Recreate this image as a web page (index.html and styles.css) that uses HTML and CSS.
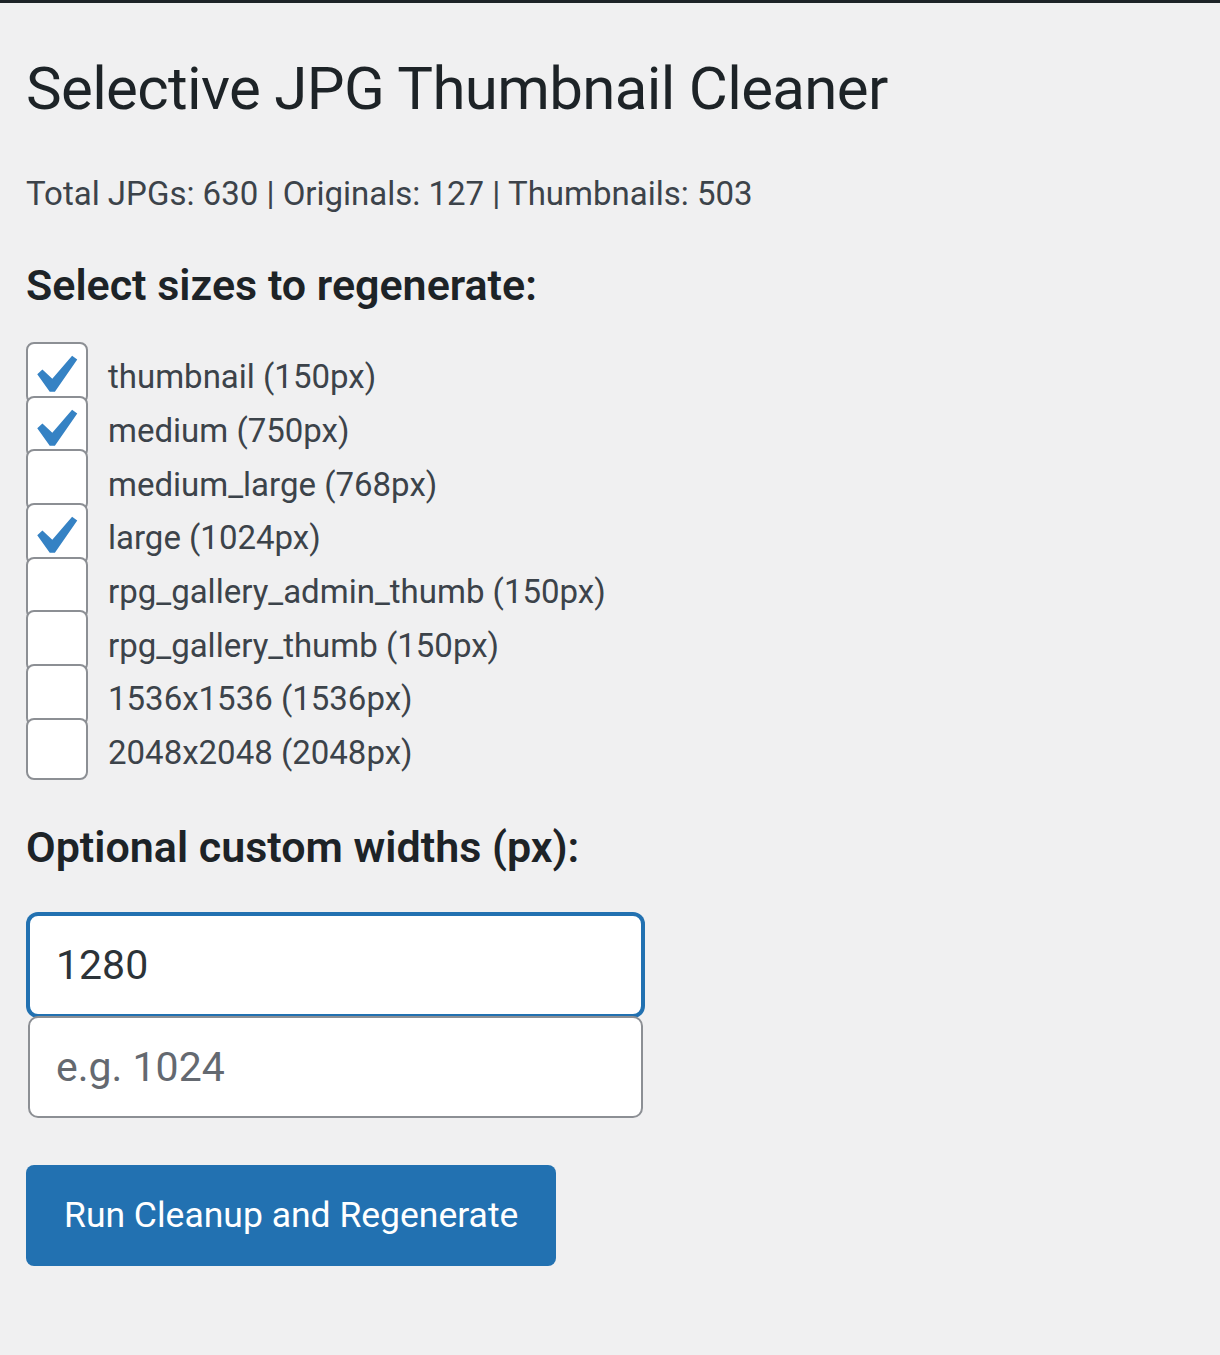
FILE: index.html
```html
<!DOCTYPE html>
<html lang="en">
<head>
  <meta charset="UTF-8">
  <title>Selective JPG Thumbnail Cleaner</title>
  <link rel="stylesheet" href="styles.css">
</head>
<body>

  <div class="adminbar"></div>

  <div class="wrap">
    <h1>Selective JPG Thumbnail Cleaner</h1>
    <p class="stats">Total JPGs: 630 | Originals: 127 | Thumbnails: 503</p>

    <form class="cleaner">
      <h2>Select sizes to regenerate:</h2>
      <div class="sizes">
        <label class="size">
          <span class="box"><svg viewBox="0 0 20 20"><path d="M14.83 4.89l1.34.94-5.81 8.38H9.02L5.78 9.67l1.34-1.25 2.57 2.4z"/></svg></span>
          <span class="name">thumbnail (150px)</span>
        </label>
        <label class="size">
          <span class="box"><svg viewBox="0 0 20 20"><path d="M14.83 4.89l1.34.94-5.81 8.38H9.02L5.78 9.67l1.34-1.25 2.57 2.4z"/></svg></span>
          <span class="name">medium (750px)</span>
        </label>
        <label class="size">
          <span class="box"></span>
          <span class="name">medium_large (768px)</span>
        </label>
        <label class="size">
          <span class="box"><svg viewBox="0 0 20 20"><path d="M14.83 4.89l1.34.94-5.81 8.38H9.02L5.78 9.67l1.34-1.25 2.57 2.4z"/></svg></span>
          <span class="name">large (1024px)</span>
        </label>
        <label class="size">
          <span class="box"></span>
          <span class="name">rpg_gallery_admin_thumb (150px)</span>
        </label>
        <label class="size">
          <span class="box"></span>
          <span class="name">rpg_gallery_thumb (150px)</span>
        </label>
        <label class="size">
          <span class="box"></span>
          <span class="name">1536x1536 (1536px)</span>
        </label>
        <label class="size">
          <span class="box"></span>
          <span class="name">2048x2048 (2048px)</span>
        </label>
      </div>

      <h2 class="widths-title">Optional custom widths (px):</h2>
      <input class="field focused" type="text" value="1280">
      <input class="field" type="text" placeholder="e.g. 1024">

      <button type="button" class="button-primary">Run Cleanup and Regenerate</button>
    </form>
  </div>

</body>
</html>
```

FILE: styles.css
```css
body {
  margin: 0;
  background: #f0f0f1;
  font-family: Roboto, "Liberation Sans", sans-serif;
  color: #3c434a;
}

.adminbar {
  height: 3px;
  background: #1d2327;
}

.wrap {
  padding: 0 26px;
}

h1 {
  margin: 47px 0 0;
  font-size: 60px;
  font-weight: 400;
  letter-spacing: -0.65px;
  line-height: 78px;
  color: #1d2327;
}

.stats {
  margin: 42px 0 0;
  font-size: 33px;
  line-height: 48px;
}

h2 {
  margin: 40px 0 0;
  font-size: 43px;
  font-weight: 600;
  line-height: 54px;
  color: #1d2327;
}

.sizes {
  margin-top: 34px;
}

.size {
  display: flex;
  align-items: center;
  gap: 20px;
  height: 53.7px;
  font-size: 33px;
  color: #3c434a;
}

.size .name {
  margin-top: 8px;
}

.box {
  position: relative;
  flex-shrink: 0;
  width: 58px;
  height: 58px;
  background: #fff;
  border: 2px solid #8c8f94;
  border-radius: 8px;
}

.box svg {
  position: absolute;
  left: -13px;
  top: -7px;
  width: 77px;
  height: 77px;
  fill: #3582c4;
}

.widths-title {
  margin-top: 44px;
}

.field {
  display: block;
  box-sizing: border-box;
  width: 615px;
  height: 102px;
  margin: 0 0 0 2px;
  padding: 0 26px;
  font-family: Roboto, "Liberation Sans", sans-serif;
  font-size: 41px;
  color: #2c3338;
  background: #fff;
  border: 2px solid #8c8f94;
  border-radius: 10px;
  outline: none;
}

.field::placeholder {
  color: #646970;
}

.field.focused {
  margin-top: 40px;
  border-color: #2271b1;
  box-shadow: 0 0 0 2px #2271b1;
}

.button-primary {
  display: block;
  margin-top: 47px;
  height: 101px;
  padding: 0 38px;
  font-family: Roboto, "Liberation Sans", sans-serif;
  font-size: 35.5px;
  color: #fff;
  background: #2271b1;
  border: none;
  border-radius: 8px;
  cursor: pointer;
}
```
